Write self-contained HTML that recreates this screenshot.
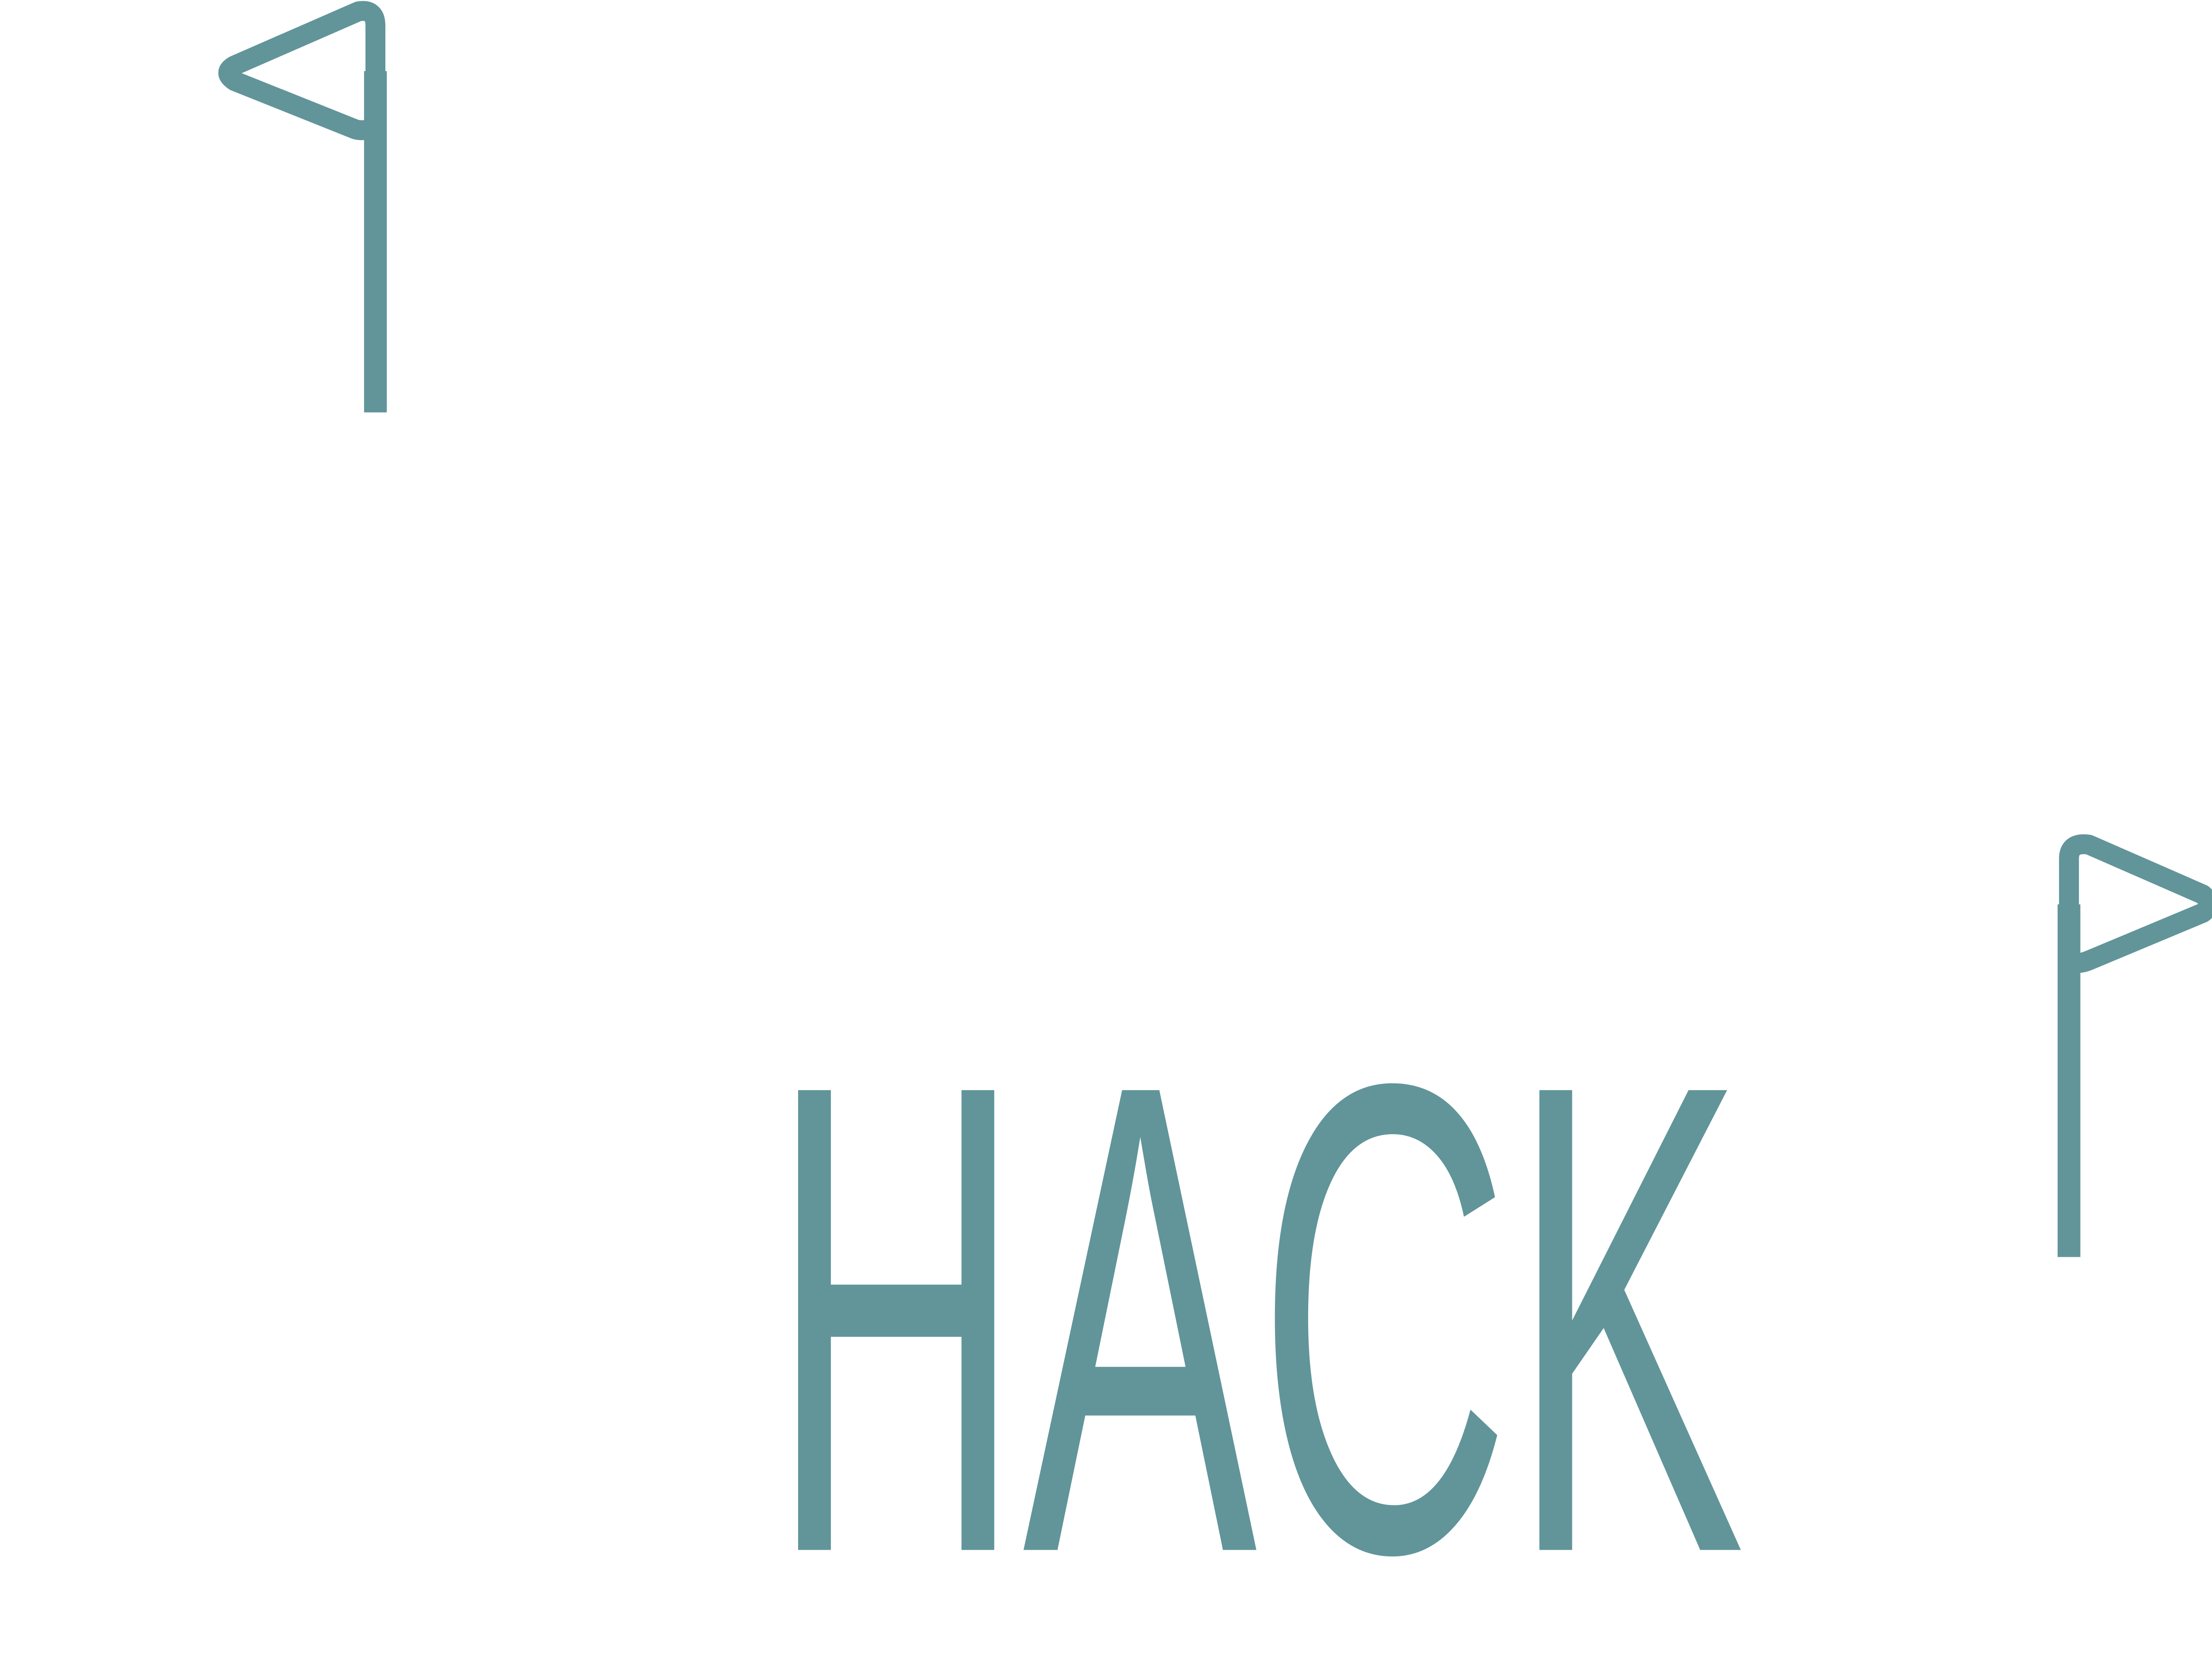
<!DOCTYPE html>
<html>
<head>
<meta charset="utf-8">
<style>
html,body{margin:0;padding:0;background:#fff;}
svg{display:block;}
</style>
</head>
<body>
<svg width="5040" height="3750" viewBox="0 0 1568 1166.7" xmlns="http://www.w3.org/2000/svg">
  <rect width="1568" height="1167" fill="#fff"/>
  <g fill="none" stroke="#61959a" stroke-linejoin="round" stroke-linecap="butt">
    <path d="M264 290 V18 Q264 6 252 8 L165 46 Q156 51 165 57 L250 91 Q258 93 264 88" stroke-width="14"/>
    <line x1="264" y1="50" x2="264" y2="290" stroke-width="16"/>
    <path d="M1455 880 V604 Q1455 592 1469 594 L1549 629 Q1557 636 1549 642 L1470 675 Q1461 679 1455 676" stroke-width="14"/>
    <line x1="1455" y1="636" x2="1455" y2="884" stroke-width="16"/>
  </g>
  <text x="541" y="1090" fill="#61959a" font-family="'Liberation Sans Narrow','Liberation Sans',sans-serif" font-size="470" textLength="686" lengthAdjust="spacingAndGlyphs">HACK</text>
</svg>
</body>
</html>
